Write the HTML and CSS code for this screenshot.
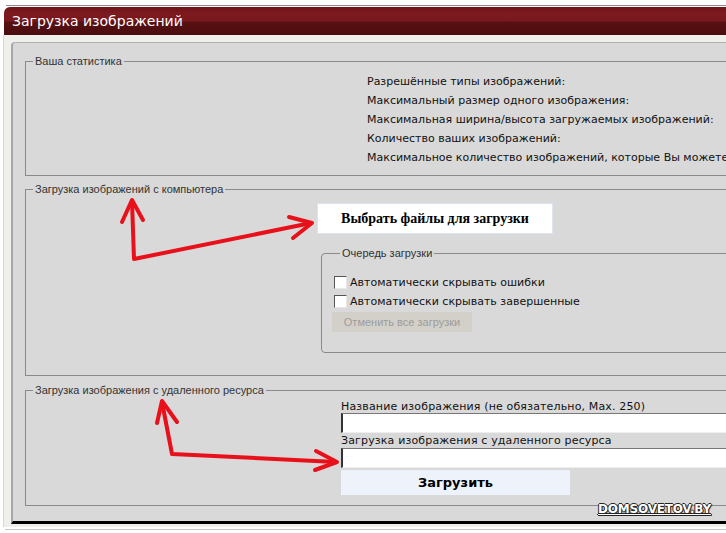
FILE: index.html
```html
<!DOCTYPE html>
<html lang="ru">
<head>
<meta charset="utf-8">
<title>Загрузка изображений</title>
<link rel="stylesheet" href="styles.css">
</head>
<body>
<div class="window">
  <div class="topline"></div>
  <div class="header">Загрузка изображений</div>
  <div class="frame">
    <div class="panel">
      <fieldset class="box stats-box">
        <legend>Ваша статистика</legend>
        <ul class="stats">
          <li>Разрешённые типы изображений:</li>
          <li>Максимальный размер одного изображения:</li>
          <li>Максимальная ширина/высота загружаемых изображений:</li>
          <li>Количество ваших изображений:</li>
          <li>Максимальное количество изображений, которые Вы можете загрузить:</li>
        </ul>
      </fieldset>

      <fieldset class="box local-box">
        <legend>Загрузка изображений с компьютера</legend>
        <button class="pick" type="button">Выбрать файлы для загрузки</button>
        <fieldset class="queue">
          <legend>Очередь загрузки</legend>
          <label class="check"><input type="checkbox"><span>Автоматически скрывать ошибки</span></label>
          <label class="check"><input type="checkbox"><span>Автоматически скрывать завершенные</span></label>
          <button class="cancel" type="button" disabled>Отменить все загрузки</button>
        </fieldset>
      </fieldset>

      <fieldset class="box remote-box">
        <legend>Загрузка изображения с удаленного ресурса</legend>
        <div class="remote">
          <label class="field-label" for="title">Название изображения (не обязательно, Max. 250)</label>
          <input class="field" id="title" type="text">
          <label class="field-label second" for="url">Загрузка изображения с удаленного ресурса</label>
          <input class="field second" id="url" type="text">
          <button class="upload" type="button">Загрузить</button>
        </div>
      </fieldset>
      <div class="watermark">DOMSOVETOV.BY</div>
    </div>
  </div>
  <div class="bottomline"></div>
  <svg class="arrows" width="726" height="533" viewBox="0 0 726 533">
    <g fill="none" stroke="#e8101a" stroke-width="4" stroke-linecap="round" stroke-linejoin="round">
      <polyline points="132,201 134,259 311,223"/>
      <polyline points="122,222 132,200 143,220"/>
      <polyline points="289,217 312,223 293,238"/>
      <polyline points="162,402 172,454 336,462"/>
      <polyline points="157,423 162,401 177,422"/>
      <polyline points="316,451 337,462 315,470"/>
    </g>
  </svg>
</div>
</body>
</html>
```
FILE: styles.css
```css
html, body {
  margin: 0;
  padding: 0;
  background: #ffffff;
  overflow: hidden;
}

body {
  font-family: "DejaVu Sans", Verdana, sans-serif;
  font-size: 11px;
  color: #111;
}

.window {
  position: relative;
  width: 820px;
  height: 533px;
  padding-top: 5px;
  box-sizing: border-box;
}

.topline {
  height: 1px;
  margin-left: 6px;
  background: #8c8c8c;
}

.header {
  margin: 1px 0 0 4px;
  height: 28px;
  line-height: 28px;
  padding-left: 8px;
  border-radius: 6px 0 0 0;
  color: #fff;
  font-size: 14px;
  background: linear-gradient(to bottom, #6f1418 0%, #7c1a1f 25%, #79181c 50%, #581012 54%, #4b0d0f 100%);
}

.frame {
  margin-left: 3px;
  padding: 7px 0 3px 7px;
  border-left: 1px solid #d8d8d8;
  background: #efefeb;
}

.panel {
  position: relative;
  background: #d9d9d9;
  border-top: 1px solid #b0b0b0;
  border-left: 2px solid #a6a6a6;
  border-bottom: 3px solid #000;
  border-top-left-radius: 4px;
  padding: 0 0 15px 12px;
}

.box {
  margin: 0;
  padding: 0;
  border: 1px solid #8a8a8a;
  min-width: 0;
}

legend {
  margin-left: 7px;
  padding: 0 2px;
  font-family: "Liberation Sans", Tahoma, sans-serif;
  font-size: 11px;
  line-height: 12px;
  color: #333;
}

.stats-box {
  margin-top: 12px;
  padding: 5px 0 8px 0;
}

.stats {
  list-style: none;
  margin: 0 0 0 341px;
  padding: 0;
  line-height: 19px;
  white-space: nowrap;
}

.local-box {
  margin-top: 7px;
  padding: 8px 0 22px 0;
}

.pick {
  display: block;
  margin-left: 291px;
  width: 236px;
  height: 31px;
  background: #fff;
  border: 1px solid #dde4f0;
  font-family: "Liberation Serif", "Times New Roman", serif;
  font-weight: bold;
  font-size: 14px;
  color: #000;
  padding: 0;
}

.queue {
  margin: 13px 0 0 295px;
  padding: 14px 0 20px 10px;
  border: 1px solid #8a8a8a;
  border-radius: 4px;
  min-width: 0;
}

.queue legend {
  margin-left: 8px;
}

.check {
  display: flex;
  align-items: center;
  height: 19px;
  white-space: nowrap;
}

.check input {
  appearance: none;
  -webkit-appearance: none;
  margin: 0 3px 0 2px;
  width: 13px;
  height: 13px;
  box-sizing: border-box;
  background: #fff;
  border-top: 1px solid #555;
  border-left: 1px solid #555;
  border-right: 1px solid #e8e8e8;
  border-bottom: 1px solid #e8e8e8;
}

.cancel {
  display: block;
  margin-top: 1px;
  width: 140px;
  height: 20px;
  padding: 0;
  border: none;
  background: #d3d0ca;
  color: #9c9c9c;
  font-family: "Liberation Sans", Tahoma, sans-serif;
  font-size: 11px;
}

.remote-box {
  margin-top: 8px;
  padding: 4px 0 10px 0;
}

.remote {
  margin-left: 315px;
  display: flex;
  flex-direction: column;
  align-items: flex-start;
}

.field-label {
  line-height: 13px;
  white-space: nowrap;
  letter-spacing: 0.15px;
}

.field-label.second {
  margin-top: 1px;
}

.field {
  width: 420px;
  height: 20px;
  box-sizing: border-box;
  margin: 0;
  background: #fff;
  border-top: 1px solid #777;
  border-left: 2px solid #333;
  border-right: 1px solid #eee;
  border-bottom: 1px solid #eee;
  padding: 0;
}

.field.second {
  margin-top: 1px;
}

.upload {
  margin-top: 2px;
  width: 229px;
  height: 25px;
  padding: 0;
  border: none;
  background: #eef3fb;
  font-family: "DejaVu Sans", Verdana, sans-serif;
  font-weight: bold;
  font-size: 13px;
  color: #000;
}

.watermark {
  position: absolute;
  left: 585px;
  bottom: 5px;
  font-family: "DejaVu Sans", Verdana, sans-serif;
  font-weight: bold;
  font-size: 12px;
  letter-spacing: -0.2px;
  color: #fff;
  text-decoration: underline;
  text-shadow: 1px 0 0 #222, -1px 0 0 #222, 0 1px 0 #222, 0 -1px 0 #222, 1px 1px 1px #555;
}

.bottomline {
  height: 1px;
  margin: 2px 0 0 5px;
  background: #c4c4c4;
}

.arrows {
  position: absolute;
  left: 0;
  top: 0;
  pointer-events: none;
}
```
